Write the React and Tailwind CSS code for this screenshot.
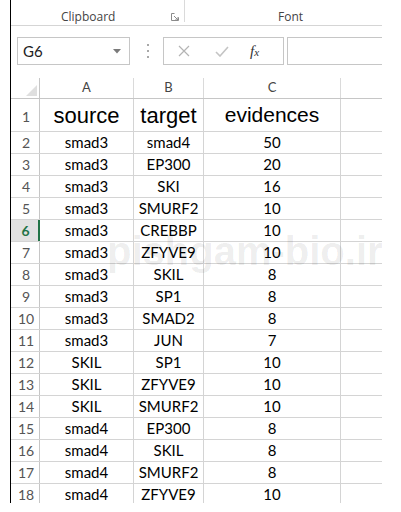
import React from "react";

const rows = [
  ["smad3", "smad4", "50"],
  ["smad3", "EP300", "20"],
  ["smad3", "SKI", "16"],
  ["smad3", "SMURF2", "10"],
  ["smad3", "CREBBP", "10"],
  ["smad3", "ZFYVE9", "10"],
  ["smad3", "SKIL", "8"],
  ["smad3", "SP1", "8"],
  ["smad3", "SMAD2", "8"],
  ["smad3", "JUN", "7"],
  ["SKIL", "SP1", "10"],
  ["SKIL", "ZFYVE9", "10"],
  ["SKIL", "SMURF2", "10"],
  ["smad4", "EP300", "8"],
  ["smad4", "SKIL", "8"],
  ["smad4", "SMURF2", "8"],
  ["smad4", "ZFYVE9", "10"],
];

function Launcher() {
  return (
    <svg width="8" height="8" viewBox="0 0 8 8" className="text-[#8a8a8a]">
      <path d="M0.5 0.5h3M0.5 0.5v7h7v-3" stroke="currentColor" fill="none" strokeWidth="1" />
      <path d="M3 3l4 4M4 7h3V4" stroke="currentColor" fill="none" strokeWidth="1" />
    </svg>
  );
}

export default function App() {
  return (
    <div className="w-[401px] h-[512px] bg-white overflow-hidden font-['Lato',sans-serif]">
      <div className="ml-[10px] w-[372px] h-[503px] border-l border-black relative flex flex-col overflow-hidden">
        {/* ribbon group labels */}
        <div className="h-[26px] shrink-0 border-b border-[#d5d5d5] flex items-start font-['Open_Sans',sans-serif] text-[12px] text-[#444]">
          <div className="w-[174px] h-[22px] border-r border-[#dadada] flex items-start pt-[9px]">
            <span className="ml-[50px] leading-[16px]">Clipboard</span>
            <span className="ml-auto mr-[5px] mt-[4px] flex">
              <Launcher />
            </span>
          </div>
          <div className="flex items-start pt-[9px]">
            <span className="ml-[93px] leading-[16px]">Font</span>
          </div>
        </div>

        {/* formula bar */}
        <div className="h-[52px] shrink-0 flex items-start pt-[11px]">
          <div className="ml-[6px] w-[113px] h-[28px] border border-[#c6c6c6] flex items-center pl-[5px] pr-[8px]">
            <span className="text-[15px] text-[#222]">G6</span>
            <svg width="8" height="5" viewBox="0 0 8 5" className="ml-auto">
              <path d="M0 0h8L4 4.5z" fill="#7a7a7a" />
            </svg>
          </div>
          <div className="ml-[16px] w-[3px] h-[28px] flex flex-col items-center justify-center gap-[4px]">
            <span className="w-[2px] h-[2px] bg-[#a8a8a8]" />
            <span className="w-[2px] h-[2px] bg-[#a8a8a8]" />
            <span className="w-[2px] h-[2px] bg-[#a8a8a8]" />
          </div>
          <div className="ml-[14px] w-[121px] h-[28px] border border-[#c6c6c6] flex items-center">
            <svg width="12" height="12" viewBox="0 0 12 12" className="ml-[14px]">
              <path d="M1 1l10 10M11 1L1 11" stroke="#b4b4b4" strokeWidth="1.2" />
            </svg>
            <svg width="14" height="11" viewBox="0 0 14 11" className="ml-[25px]">
              <path d="M1 6l4 4L13 1" stroke="#c4c4c4" strokeWidth="1.6" fill="none" />
            </svg>
            <span className="ml-[21px] font-['Liberation_Serif',serif] italic text-[#333] text-[15px] leading-none">
              f<span className="text-[11px]">x</span>
            </span>
          </div>
          <div className="ml-[3px] flex-1 h-[28px] border border-[#c6c6c6] border-r-0" />
        </div>

        {/* column headers */}
        <div className="h-[21px] shrink-0 flex border-b border-[#c6c6c6] text-[13px] text-[#444]">
          <div className="w-[29px] border-r border-[#c6c6c6] flex items-end justify-end pr-[2px] pb-[2px]">
            <svg width="11" height="11" viewBox="0 0 11 11">
              <path d="M11 0V11H0z" fill="#dfdfdf" />
            </svg>
          </div>
          <div className="w-[94px] border-r border-[#dadada] flex items-center justify-center">A</div>
          <div className="w-[70px] border-r border-[#dadada] flex items-center justify-center">B</div>
          <div className="w-[137px] border-r border-[#dadada] flex items-center justify-center">C</div>
          <div className="w-[41px]" />
        </div>

        {/* row 1 */}
        <div className="h-[33px] shrink-0 flex border-b border-[#d4d4d4]">
          <div className="w-[29px] border-r border-[#c6c6c6] flex items-center justify-center pl-[2px] pt-[3px] text-[14px] text-[#555]">
            1
          </div>
          <div className="w-[94px] border-r border-[#d4d4d4] flex items-center justify-center font-['Liberation_Sans',sans-serif] text-[22px] text-black">
            source
          </div>
          <div className="w-[70px] border-r border-[#d4d4d4] flex items-center justify-center font-['Liberation_Sans',sans-serif] text-[22px] text-black">
            target
          </div>
          <div className="w-[137px] border-r border-[#d4d4d4] flex items-center justify-center font-['Liberation_Sans',sans-serif] text-[21px] text-black">
            evidences
          </div>
          <div className="w-[41px]" />
        </div>

        {rows.map((r, i) => {
          const n = i + 2;
          const sel = n === 6;
          return (
            <div key={n} className="h-[22px] shrink-0 flex border-b border-[#d4d4d4] text-[15px] text-black">
              <div
                className={
                  sel
                    ? "w-[29px] border-r-2 border-[#217346] bg-[#e1e1e1] flex items-center justify-center pl-[2px] text-[14px] font-bold text-[#217346]"
                    : "w-[29px] border-r border-[#c6c6c6] flex items-center justify-center pl-[2px] text-[14px] text-[#555]"
                }
              >
                {n}
              </div>
              <div className="w-[94px] border-r border-[#d4d4d4] flex items-center justify-center">{r[0]}</div>
              <div className="w-[70px] border-r border-[#d4d4d4] flex items-center justify-center">{r[1]}</div>
              <div className="w-[137px] border-r border-[#d4d4d4] flex items-center justify-center">{r[2]}</div>
              <div className="w-[41px]" />
            </div>
          );
        })}

        {/* watermark */}
        <div className="absolute left-[96px] top-[231px] font-['Liberation_Sans',sans-serif] font-bold text-[40px] leading-[40px] text-black/[0.08] whitespace-nowrap pointer-events-none">
          pishgam-bio.ir
        </div>
      </div>
    </div>
  );
}
